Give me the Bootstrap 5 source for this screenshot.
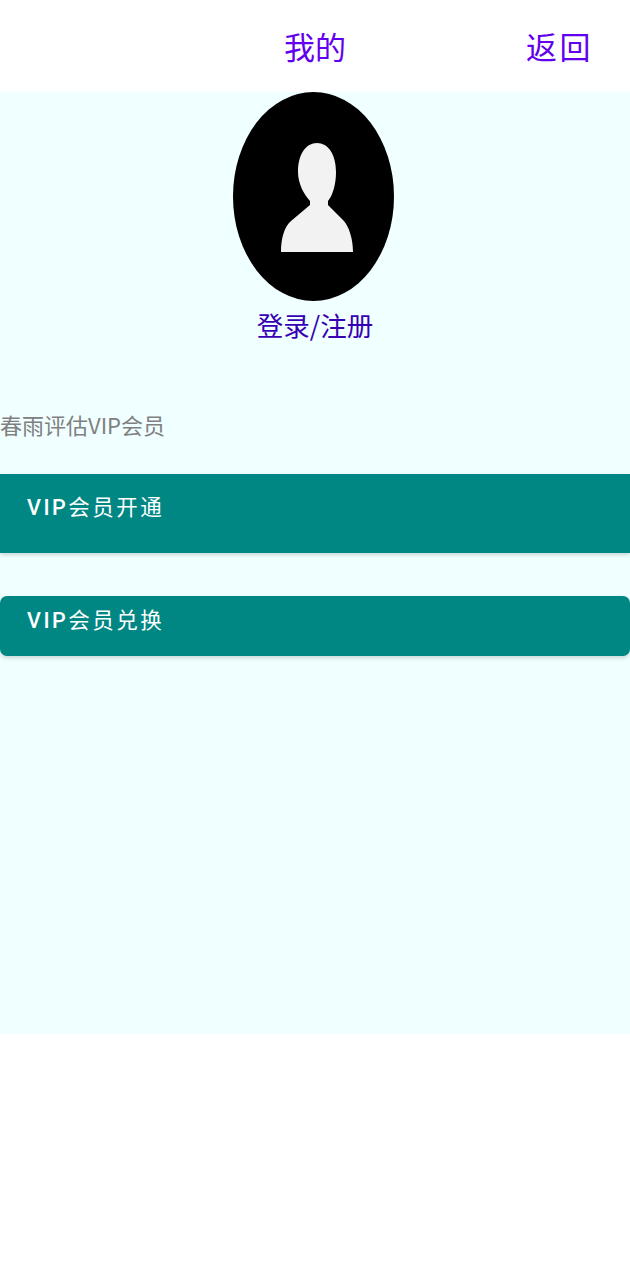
<!doctype html>
<html lang="zh">
<head>
<meta charset="utf-8">
<link href="https://cdn.jsdelivr.net/npm/bootstrap@5.3.0/dist/css/bootstrap.min.css" rel="stylesheet">
<style>
html,body{background:#fff;font-family:"Noto Sans CJK SC","Roboto",sans-serif;}
.top-bar{height:92px;position:relative;color:#6200ee;font-size:31px;line-height:1;}
.top-back{position:absolute;right:37px;top:30px;letter-spacing:2.5px;}
.top-mid{position:absolute;left:0;right:0;top:30px;text-align:center;}
.pane{background:#f0ffff;height:942px;}
.avatar-svg{display:block;width:162px;height:210px;margin-right:2px;filter:blur(.7px);}
.avatar-wrap{height:210px;overflow:hidden;}
.login-text{color:#3700b3;font-size:26.5px;line-height:30px;margin-top:8px;}
.vip-label{color:#808080;font-size:22px;line-height:30px;margin-top:69px;}
.vip-btn{display:block;width:100%;background:#008784;color:#fff;font-family:"Roboto","Noto Sans CJK SC",sans-serif;font-weight:400;font-size:21.5px;letter-spacing:2.5px;text-align:left;padding:19px 27px 0;line-height:30px;box-shadow:0 2px 4px rgba(0,0,0,.16);}
.vip-latin{font-weight:500;}
.btn-one{height:79px;margin-top:35px;}
.btn-two{height:60px;margin-top:43px;border-radius:7px;padding-top:10px;}
</style>
</head>
<body class="m-0">
<div class="top-bar">
  <div class="top-mid">我的</div>
  <div class="top-back">返回</div>
</div>
<div class="pane">
  <div class="avatar-wrap d-flex justify-content-center">
    <svg class="avatar-svg" viewBox="0 0 162 210" role="img" aria-label="avatar">
      <ellipse cx="80.5" cy="104.5" rx="80.5" ry="104.5" fill="#000"/>
      <path d="M84 51C95 51 103 62 103 80C103 92 100 103 95 109V113L110 128C116 134 120 147 120 160H48C48 147 51 135 58 129L77 113V109C71 102 65 92 65 80C65 62 73 51 84 51Z" fill="#f2f2f2"/>
    </svg>
  </div>
  <div class="login-text text-center">登录/注册</div>
  <div class="vip-label">春雨评估VIP会员</div>
  <div class="vip-btn btn-one"><span class="vip-latin">VIP</span>会员开通</div>
  <div class="vip-btn btn-two"><span class="vip-latin">VIP</span>会员兑换</div>
</div>
<script src="https://cdn.jsdelivr.net/npm/bootstrap@5.3.0/dist/js/bootstrap.bundle.min.js"></script>
</body>
</html>
